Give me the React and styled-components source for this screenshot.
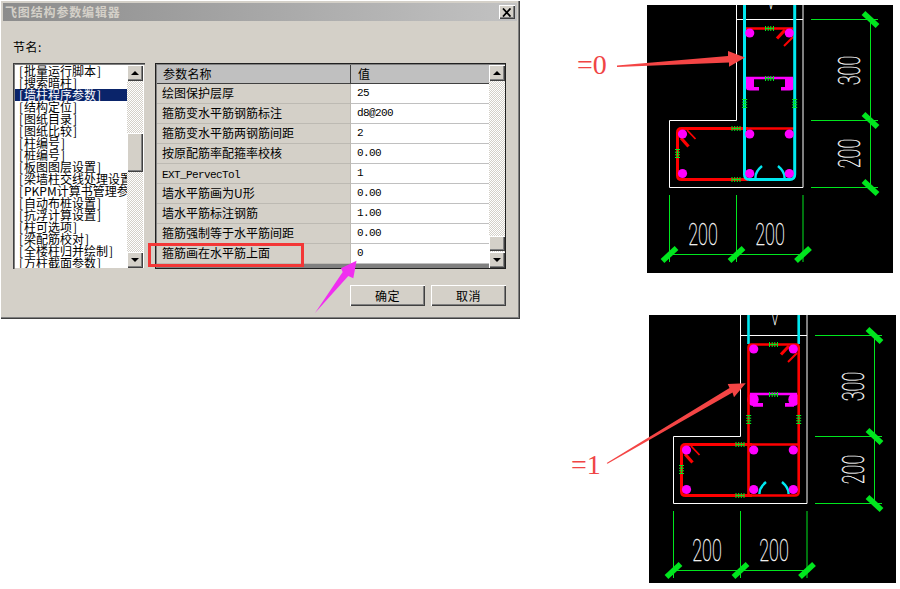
import React from 'react';
import styled, { createGlobalStyle, css } from 'styled-components';

const Global = createGlobalStyle`
  html, body { margin: 0; padding: 0; background: #fff; }
  body { font-family: "Noto Sans CJK SC", sans-serif; font-size: 12px; color: #000; }
`;

const CJK = `"Noto Sans CJK SC", "Liberation Sans", sans-serif`;
const raised = css`
  box-shadow: inset 1px 1px #fff, inset -1px -1px #404040, inset -2px -2px #808080;
`;

const Page = styled.div`
  width: 900px; height: 589px; display: flex; overflow: hidden; background: #fff;
`;

const Dialog = styled.div`
  position: relative; box-sizing: border-box; width: 520px; height: 319px; flex: none;
  background: #d4d0c8; padding: 3px 3px 0;
  box-shadow: inset 1px 1px #fff, inset -1px -1px #404040, inset -2px -2px #808080;
`;
const TitleBar = styled.div`
  height: 18px; display: flex; align-items: center; justify-content: space-between;
  padding: 0 2px; background: linear-gradient(90deg, #8c8c8c, #c2c2c2);
`;
const TitleText = styled.span`
  font: bold 12px/18px ${CJK}; letter-spacing: 0.85px; color: #d4d0c8;
`;
const CloseButton = styled.div`
  width: 16px; height: 14px; background: #d4d0c8; display: flex; align-items: center; justify-content: center;
  ${raised}
  svg { display: block; }
`;
const Body = styled.div`
  padding: 20px 11px 0 10px;
`;
const SectionLabel = styled.div`
  font: 12px/12px ${CJK}; height: 22px; letter-spacing: 0.5px;
`;
const Panels = styled.div`
  display: flex; gap: 10px; height: 206px;
`;

const ListBox = styled.div`
  box-sizing: border-box; width: 132px; height: 206px; display: flex; background: #fff; overflow: hidden;
  padding: 2px 2px 1px 2px;
  box-shadow: inset 1px 1px #404040, inset 2px 2px #808080, inset -1px -1px #d4d0c8;
`;
const ListRows = styled.div`
  flex: 1; min-width: 0; overflow: hidden;
`;
const ListRow = styled.div`
  height: 12px; padding-left: 3px; white-space: nowrap;
  font: 12px/12px ${CJK};
  background: ${p => (p.$selected ? '#0a246a' : 'transparent')};
  color: ${p => (p.$selected ? '#fff' : '#000')};
`;
const Bracket = styled.span`
  display: inline-block; width: 6px; text-align: center;
`;

const ScrollBar = styled.div`
  width: 16px; flex: none; display: flex; flex-direction: column;
  background-color: #fff;
  background-image: conic-gradient(#d4d0c8 25%, #fff 0 50%, #d4d0c8 0 75%, #fff 0);
  background-size: 2px 2px;
`;
const ScrollButton = styled.div`
  width: 16px; height: 16px; flex: none; background: #d4d0c8; display: flex; align-items: center; justify-content: center;
  ${raised}
  &::after {
    content: ''; width: 0; height: 0; border-left: 4px solid transparent; border-right: 4px solid transparent;
    ${p => (p.$down ? 'border-top: 4px solid #000;' : 'border-bottom: 4px solid #000;')}
  }
`;
const ScrollTrack = styled.div`
  flex: 1; padding-top: ${p => p.$before}px;
`;
const ScrollThumb = styled.div`
  height: ${p => p.$size}px; background: #d4d0c8; box-sizing: border-box;
  ${raised}
`;

const TableFrame = styled.div`
  box-sizing: border-box; width: 351px; height: 206px; display: flex; background: #808080; overflow: hidden;
  padding: 2px 1px 1px 2px;
  box-shadow: inset 1px 1px #202020, inset -1px -1px #202020;
`;
const TableMain = styled.div`
  flex: 1; display: grid; grid-template-columns: 194px 138px; grid-auto-rows: 20px; align-content: start;
  grid-template-rows: 19px;
`;
const HeadCell = styled.div`
  background: #c0c0c0; font: 12px/17px ${CJK}; letter-spacing: 0.2px;
  padding-left: ${p => p.$pad}px; box-sizing: border-box;
  border-bottom: 1px solid #404040; border-right: ${p => (p.$sep ? '1px solid #404040' : 'none')};
`;
const NameCell = styled.div`
  background: #d4d0c8; font: 12px/18px ${CJK}; padding-left: 5px; box-sizing: border-box; white-space: nowrap;
  border-bottom: 1px solid #bdbab3; border-right: 1px solid #bdbab3;
`;
const MonoName = styled.span`
  font: 11px/18px "Liberation Mono", monospace; letter-spacing: -0.6px;
`;
const ValueCell = styled.div`
  background: #fff; font: 11px/18px "Liberation Mono", monospace; letter-spacing: -0.6px;
  padding-left: 6px; box-sizing: border-box; border-bottom: 1px solid #c0c0c0;
`;

const Footer = styled.div`
  display: flex; justify-content: flex-end; gap: 6px; margin-top: 16px;
`;
const DialogButton = styled.div`
  width: 75px; height: 21px; background: #d4d0c8; text-align: center;
  font: 12px/21px ${CJK}; letter-spacing: 0.5px;
  ${raised}
`;

const Highlight = styled.div`
  position: absolute; left: 148px; top: 243px; width: 156px; height: 24px; box-sizing: border-box;
  border: 3px solid #f33737;
`;
const Overlay = styled.svg`
  position: absolute; left: 0; top: 0; pointer-events: none; display: block;
`;

const RightColumn = styled.div`
  margin-left: 51px; width: 329px; flex: none; display: flex; flex-direction: column; gap: 42px; padding-top: 5px;
`;
const Figure = styled.div`
  position: relative; display: flex; height: 268px;
`;
const Note = styled.div`
  flex: none; box-sizing: border-box; width: ${p => p.$width}px; padding-left: ${p => p.$indent}px; padding-top: ${p => p.$top}px;
  font: 28px/32px "Liberation Serif", serif; color: #f04545;
`;
const CadPanel = styled.svg`
  display: block; flex: none; background: #000;
`;
const CadText = styled.text`
  font-family: "Roboto", "Liberation Sans", sans-serif; font-weight: 100; fill: #fff; stroke: #fff; stroke-width: 0.35;
  font-size: ${p => p.$size || 31}px; text-anchor: middle;
`;

const listItems = [
  '批量运行脚本', '搜索暗柱', '墙柱程序参数', '结构定位', '图纸目录', '图纸比较', '柱编号', '桩编号',
  '板图图层设置', '梁墙柱交线处理设置', 'PKPM计算书管理参数', '自动布桩设置', '抗浮计算设置', '柱可选项',
  '梁配筋校对', '全楼柱归并绘制', '方柱截面参数',
];
const params = [
  ['绘图保护层厚', '25'], ['箍筋变水平筋钢筋标注', 'd8@200'], ['箍筋变水平筋两钢筋间距', '2'],
  ['按原配筋率配箍率校核', '0.00'], ['EXT_PervecTol', '1', true], ['墙水平筋画为U形', '0.00'],
  ['墙水平筋标注钢筋', '1.00'], ['箍筋强制等于水平筋间距', '0.00'], ['箍筋画在水平筋上面', '0'],
];

const GREEN = '#00e61e';
const RED = '#ff0000';
const CYAN = '#00e8f0';
const MAG = '#ff00ff';

function Tag({ x, y, v }) {
  return (
    <g transform={`translate(${x} ${y})${v ? ' rotate(90)' : ''}`} stroke={GREEN} strokeWidth="1" fill="none">
      <path d="M-4-2.5V2.5M-1.3-2.5V2.5M1.3-2.5V2.5M4-2.5V2.5M-4 0H4" />
    </g>
  );
}

function Tick({ x, y, up }) {
  return up
    ? <path d={`M${x - 7} ${y + 6.5}L${x + 7} ${y - 6.5}`} stroke={GREEN} strokeWidth="5.5" />
    : <path d={`M${x - 7} ${y - 6.5}L${x + 7} ${y + 6.5}`} stroke={GREEN} strokeWidth="5.5" />;
}

function Dim({ x, y, rotate, children }) {
  return (
    <CadText transform={`translate(${x} ${y}) rotate(${rotate || 0}) scale(0.58 1)`}>{children}</CadText>
  );
}

function RebarDrawing({ stirrupOnTop }) {
  const dots = [[749.7, 33], [789.3, 33], [749.7, 134], [789.3, 134], [749.7, 173.5], [789.3, 173.5], [682.5, 134], [682.5, 173.5]];
  return (
    <>
      <path d="M736.5-2V120.5H669.5V187.5H803V-2M736.5 19.5H803" fill="none" stroke="#fff" strokeWidth="1" />
      <CadText $size={14} transform="translate(771 9) scale(0.7 1)">V</CadText>

      {/* dimensions */}
      <path d="M811 19.5H878M811 120.5H878M811 187.5H878M870.5 19.5V187.5M669.5 195V262M736.5 195V262M803 195V262M669.5 254.5H803" fill="none" stroke={GREEN} strokeWidth="1" />
      <Tick x={870.5} y={19.5} /><Tick x={870.5} y={120.5} /><Tick x={870.5} y={187.5} />
      <Tick x={669.5} y={254.5} up /><Tick x={736.5} y={254.5} up /><Tick x={803} y={254.5} up />
      <Dim x={860} y={70.5} rotate={-90}>300</Dim>
      <Dim x={860} y={153.5} rotate={-90}>200</Dim>
      <Dim x={703} y={245}>200</Dim>
      <Dim x={770} y={245}>200</Dim>

      {/* L-shaped tie */}
      <path d="M748 128.5H681.5Q677.5 128.5 677.5 132.5V175.5Q677.5 179.5 681.5 179.5H748" fill="none" stroke={RED} strokeWidth="3" />
      <path d="M681 138L688.5 146.5" stroke={RED} strokeWidth="3.2" />
      <path d="M687 130L695.5 139" stroke={RED} strokeWidth="1.8" />
      <path d="M745 128.5H794" stroke={RED} strokeWidth="2.6" />

      {/* top hooks */}
      <path d="M785 30L777 38.5" stroke={RED} strokeWidth="3.2" />
      <path d="M793 37L784 46" stroke={RED} strokeWidth="2" />

      {/* cyan hooks */}
      <path d="M755.5 178Q755 172 762 166M784.5 178Q785 172 778 166" fill="none" stroke={CYAN} strokeWidth="2.4" />

      {stirrupOnTop ? (
        <>
          <path d="M746 28.5H793" stroke={RED} strokeWidth="2.6" />
          <path d="M746 78H793" stroke={MAG} strokeWidth="2.6" />
          <path d="M746 79Q746 77 750 77H754V87H759V90.5H750Q746 90.5 746 88ZM793.5 79Q793.5 77 789.5 77H785V87H781V90.5H789.5Q793.5 90.5 793.5 88Z" fill={MAG} />
          <path d="M744.5-2V174.5Q744.5 179.5 749.5 179.5H789.7Q794.7 179.5 794.7 174.5V-2" fill="none" stroke={CYAN} strokeWidth="3" />
        </>
      ) : (
        <>
          <path d="M744.5-2V28M794.7-2V28" stroke={CYAN} strokeWidth="2.6" />
          <path d="M746 78H793" stroke={MAG} strokeWidth="2.6" />
          <ellipse cx="749" cy="83.5" rx="5.7" ry="6.5" fill={MAG} />
          <ellipse cx="790" cy="83.5" rx="5.7" ry="6.5" fill={MAG} />
          <path d="M749 87H759V90.7H749ZM790 87H781V90.7H790Z" fill={MAG} />
          <path d="M744.5 179.5V31.5Q744.5 28.5 747.5 28.5H791.7Q794.7 28.5 794.7 31.5V175.5Q794.7 179.5 790.7 179.5H744.5" fill="none" stroke={RED} strokeWidth="2.6" />
        </>
      )}

      {dots.map(([cx, cy]) => <circle key={`${cx}-${cy}`} cx={cx} cy={cy} r="4.6" fill={MAG} />)}

      <Tag x={769.5} y={28.5} /><Tag x={769.5} y={78.5} />
      <Tag x={744.7} y={103.5} v /><Tag x={794.7} y={103.5} v />
      <Tag x={736} y={128.5} /><Tag x={736} y={179.5} /><Tag x={677.5} y={153.5} v />
    </>
  );
}

export default function App() {
  return (
    <Page>
      <Global />
      <Dialog>
        <TitleBar>
          <TitleText>飞图结构参数编辑器</TitleText>
          <CloseButton>
            <svg width="10" height="9" viewBox="0 0 10 9"><path d="M1 0.5L8.5 8.5M8.5 0.5L1 8.5" stroke="#000" strokeWidth="1.8" /></svg>
          </CloseButton>
        </TitleBar>
        <Body>
          <SectionLabel>节名:</SectionLabel>
          <Panels>
            <ListBox>
              <ListRows>
                {listItems.map((t, i) => (
                  <ListRow key={t} $selected={i === 2}><Bracket>[</Bracket>{t}<Bracket>]</Bracket></ListRow>
                ))}
              </ListRows>
              <ScrollBar>
                <ScrollButton />
                <ScrollTrack $before={52}><ScrollThumb $size={39} /></ScrollTrack>
                <ScrollButton $down />
              </ScrollBar>
            </ListBox>
            <TableFrame>
              <TableMain>
                <HeadCell $pad={6} $sep>参数名称</HeadCell>
                <HeadCell $pad={7}>值</HeadCell>
                {params.map(([n, v, mono]) => (
                  <React.Fragment key={n}>
                    <NameCell>{mono ? <MonoName>{n}</MonoName> : n}</NameCell>
                    <ValueCell>{v}</ValueCell>
                  </React.Fragment>
                ))}
              </TableMain>
              <ScrollBar>
                <ScrollButton />
                <ScrollTrack $before={155}><ScrollThumb $size={15} /></ScrollTrack>
                <ScrollButton $down />
              </ScrollBar>
            </TableFrame>
          </Panels>
          <Footer>
            <DialogButton>确定</DialogButton>
            <DialogButton>取消</DialogButton>
          </Footer>
        </Body>
        <Highlight />
        <Overlay width="520" height="319" viewBox="0 0 520 319">
          <path d="M315 313L342.7 272L341 268.3L356.5 260.7L353.3 278.3L348.3 276Z" fill="#f02ef0" />
        </Overlay>
      </Dialog>

      <RightColumn>
        <Figure>
          <Note $width={76} $indent={6} $top={44}>=0</Note>
          <CadPanel width="246" height="268" viewBox="647 5 246 268"><RebarDrawing stirrupOnTop /></CadPanel>
          <Overlay width="329" height="268" viewBox="571 5 329 268">
            <path d="M617 65.5L728 56V51L745 57.5L729 66.7V62.5L617 67Z" fill="#f44545" />
          </Overlay>
        </Figure>
        <Figure>
          <Note $width={78} $indent={0} $top={134}>=1</Note>
          <CadPanel width="247" height="268" viewBox="645 -1 247 268"><RebarDrawing /></CadPanel>
          <Overlay width="329" height="268" viewBox="571 315 329 268">
            <path d="M606.7 463L729.5 388L727.7 384L745.7 383.3L734 397.3L732.5 392.5L607.5 463.8Z" fill="#f44545" />
          </Overlay>
        </Figure>
      </RightColumn>
    </Page>
  );
}
